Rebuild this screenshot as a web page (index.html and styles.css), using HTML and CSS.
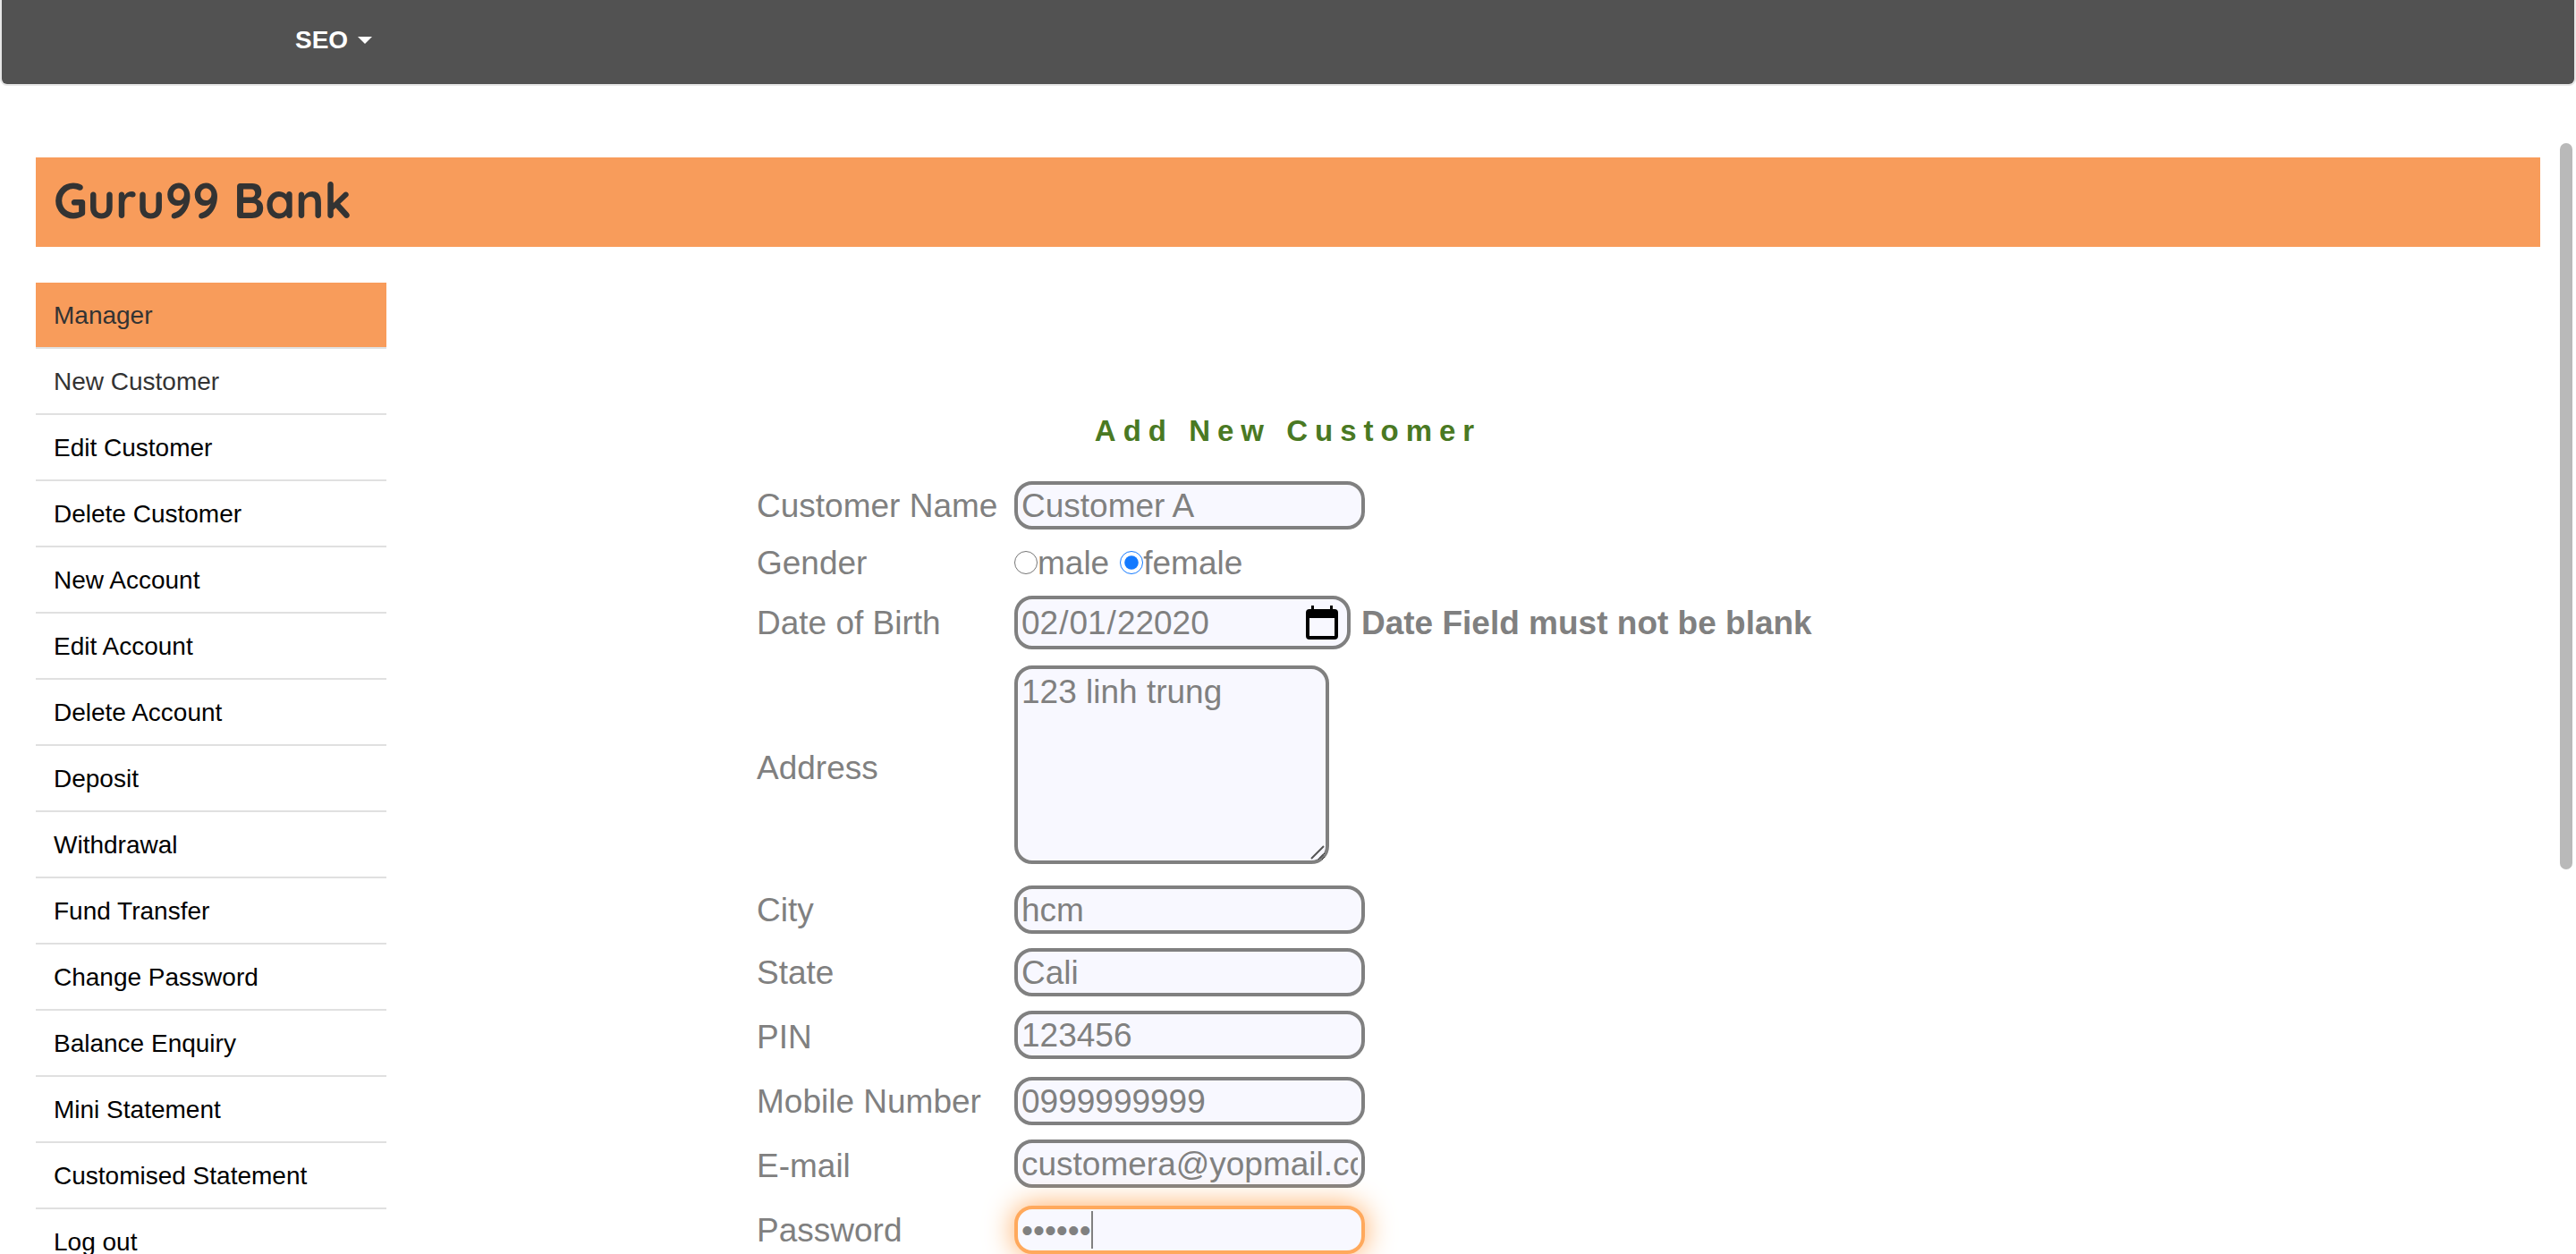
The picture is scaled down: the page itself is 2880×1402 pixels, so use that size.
FILE: index.html
```html
<!DOCTYPE html>
<html lang="en-US">
<head>
<meta charset="utf-8">
<title>Guru99 Bank - Add New Customer</title>
<link rel="stylesheet" href="styles.css">
</head>
<body>
<nav class="navbar">
  <button type="button" class="navbar-toggle">SEO <span class="caret"></span></button>
</nav>
<header class="banner"><h1 class="brand">Guru99 Bank</h1></header>
<div class="layout">
  <ul class="menu">
    <li class="menu-item active"><a href="#">Manager</a></li>
    <li class="menu-item current"><a href="#">New Customer</a></li>
    <li class="menu-item"><a href="#">Edit Customer</a></li>
    <li class="menu-item"><a href="#">Delete Customer</a></li>
    <li class="menu-item"><a href="#">New Account</a></li>
    <li class="menu-item"><a href="#">Edit Account</a></li>
    <li class="menu-item"><a href="#">Delete Account</a></li>
    <li class="menu-item"><a href="#">Deposit</a></li>
    <li class="menu-item"><a href="#">Withdrawal</a></li>
    <li class="menu-item"><a href="#">Fund Transfer</a></li>
    <li class="menu-item"><a href="#">Change Password</a></li>
    <li class="menu-item"><a href="#">Balance Enquiry</a></li>
    <li class="menu-item"><a href="#">Mini Statement</a></li>
    <li class="menu-item"><a href="#">Customised Statement</a></li>
    <li class="menu-item"><a href="#">Log out</a></li>
  </ul>
  <main class="content">
    <form class="form">
      <h2 class="form-title">Add New Customer</h2>
      <div class="row">
        <label class="caption" for="name">Customer Name</label>
        <input class="field" id="name" type="text" value="Customer A">
      </div>
      <div class="row" role="radiogroup" aria-labelledby="gender">
        <span class="caption" id="gender">Gender</span>
        <div class="choices">
          <label class="choice"><input class="radio" type="radio" name="gender"><span class="caption">male</span></label>
          <label class="choice"><input class="radio" type="radio" name="gender" checked><span class="caption">female</span></label>
        </div>
      </div>
      <div class="row">
        <label class="caption" for="dob">Date of Birth</label>
        <div class="with-message">
          <input class="field field-date" id="dob" type="date" value="22020-02-01">
          <span class="caption message">Date Field must not be blank</span>
        </div>
      </div>
      <div class="row">
        <label class="caption" for="address">Address</label>
        <div class="area">
          <textarea class="field field-area" id="address">123 linh trung</textarea>
          <svg class="grip" viewBox="0 0 16 16" aria-hidden="true"><path d="M1 15 15 1M10 15l5-5" fill="none" stroke="#555"/></svg>
        </div>
      </div>
      <div class="row">
        <label class="caption" for="city">City</label>
        <input class="field" id="city" type="text" value="hcm">
      </div>
      <div class="row">
        <label class="caption" for="state">State</label>
        <input class="field" id="state" type="text" value="Cali">
      </div>
      <div class="row row-tall">
        <label class="caption" for="pin">PIN</label>
        <input class="field" id="pin" type="text" value="123456">
      </div>
      <div class="row">
        <label class="caption" for="mobile">Mobile Number</label>
        <input class="field" id="mobile" type="text" value="0999999999">
      </div>
      <div class="row row-tall">
        <label class="caption" for="email">E-mail</label>
        <input class="field" id="email" type="text" value="customera@yopmail.com">
      </div>
      <div class="row">
        <label class="caption" for="password">Password</label>
        <div class="password">
          <input class="field field-focus" id="password" type="password" value="123456">
          <span class="text-cursor"></span>
        </div>
      </div>
    </form>
  </main>
</div>
<div class="scroll-thumb"></div>
</body>
</html>
```
FILE: styles.css
```css
* { box-sizing: border-box; }

body {
  margin: 0;
  height: 100vh;
  overflow: hidden;
  position: relative;
  background: #fff;
  color: #333;
  font: 28px/40px "Liberation Sans", Arial, sans-serif;
}

.navbar {
  height: 96px;
  padding: 25px 328px;
  background: #525252;
  border: 2px solid #e7e7e7;
  border-top: 0;
  border-radius: 0 0 8px 8px;
}

.navbar-toggle {
  display: flex;
  align-items: center;
  gap: 11px;
  padding: 0;
  border: 0;
  background: none;
  color: #fff;
  font: inherit;
  font-weight: bold;
}

.caret {
  border: 8px solid transparent;
  border-top-color: #fff;
  border-bottom: 0;
}

.banner {
  margin: 80px 40px 40px;
  padding: 14px 20px 18px;
  background: #f89c5b;
}

.brand {
  margin: 0;
  font: 700 54px/68px Quicksand, Inter, sans-serif;
}

.layout {
  display: grid;
  grid-template-columns: 14% 1fr 14%;
  margin: 0 40px;
}

.menu { margin: 0; padding: 0; list-style: none; }
.menu-item { border-bottom: 2px solid #e0e0e0; }
.menu-item a {
  display: block;
  padding: 17px 20px 15px;
  color: #000;
  text-decoration: none;
}
.menu-item.active { background: #f89c5b; background-clip: padding-box; }
.menu-item.active a, .menu-item.current a { color: #333; }

.content { padding-top: 146px; }

.form {
  display: flex;
  flex-direction: column;
  gap: 16px;
  max-width: 1188px;
  margin: 0 auto;
  color: #808080;
  font-size: 37px;
  line-height: 42px;
}

.form-title {
  margin: 0 0 20px;
  color: #4a7923;
  font-size: 33px;
  line-height: 40px;
  letter-spacing: 8px;
  text-align: center;
}

.row {
  display: grid;
  grid-template-columns: 288px 1fr;
  align-items: center;
}
.row-tall { min-height: 58px; }
.row-tall .field { align-self: start; }

.caption { padding-top: 2px; line-height: 40px; }

.field {
  display: block;
  width: 392px;
  height: 54px;
  padding: 3px 4px 1px;
  border: 4px solid #808080;
  border-radius: 20px;
  outline: 0;
  background: #f8f8ff;
  color: #808080;
  font: inherit;
}

.choices { display: flex; gap: 12px; }
.choice { display: flex; align-items: center; }
.radio { width: 26px; height: 26px; margin: 0; accent-color: #147aff; }

.with-message { display: flex; align-items: center; gap: 12px; }
.message { font-weight: bold; white-space: nowrap; }

.field-date { width: 376px; height: 60px; padding: 3px 10px 1px 3px; }
.field-date::-webkit-calendar-picker-indicator {
  width: 36px;
  height: 40px;
  padding: 0;
  background: url("data:image/svg+xml,%3Csvg xmlns='http://www.w3.org/2000/svg' viewBox='0 0 36 42'%3E%3Cpath fill-rule='evenodd' d='M6 0h3v4h18V0h3v4h2q4 0 4 4v26q0 4-4 4H4q-4 0-4-4V8q0-4 4-4h2zM4 14v20h28V14z'/%3E%3C/svg%3E") top / 36px 42px no-repeat;
}

.area { position: relative; width: 352px; padding: 2px 0 8px; }
.field-area {
  width: 100%;
  height: 222px;
  padding: 5px 4px 4px;
  resize: both;
}
.grip {
  position: absolute;
  right: 5px;
  bottom: 13px;
  width: 16px;
  height: 16px;
  stroke-width: 2px;
  pointer-events: none;
}

.password { position: relative; }
.field-focus {
  border-color: #ffa95c;
  box-shadow: 0 0 32px #ffa95c;
}
.text-cursor {
  position: absolute;
  top: 6px;
  left: 86px;
  width: 2px;
  height: 42px;
  background: #808080;
}

.scroll-thumb {
  position: absolute;
  top: 160px;
  right: 4px;
  width: 14px;
  height: 812px;
  border-radius: 7px;
  background: #b9b9b9;
}
```
